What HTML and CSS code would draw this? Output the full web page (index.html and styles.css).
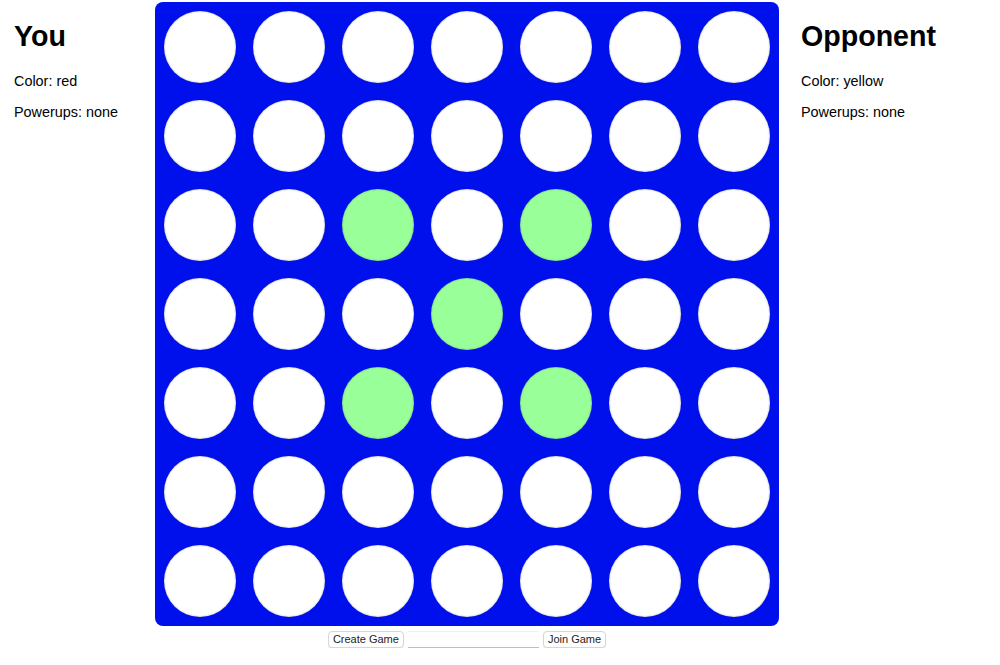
FILE: index.html
```html
<!DOCTYPE html>
<html>
<head>
<meta charset="utf-8">
<link rel="stylesheet" href="styles.css">
</head>
<body>
<div class="page">
  <div class="player player-left">
    <h1 class="name">You</h1>
    <p class="info">Color: red</p>
    <p class="info">Powerups: none</p>
  </div>
  <div class="center">
    <div class="board">
      <div class="cell"><div class="hole"></div></div>
      <div class="cell"><div class="hole"></div></div>
      <div class="cell"><div class="hole"></div></div>
      <div class="cell"><div class="hole"></div></div>
      <div class="cell"><div class="hole"></div></div>
      <div class="cell"><div class="hole"></div></div>
      <div class="cell"><div class="hole"></div></div>

      <div class="cell"><div class="hole"></div></div>
      <div class="cell"><div class="hole"></div></div>
      <div class="cell"><div class="hole"></div></div>
      <div class="cell"><div class="hole"></div></div>
      <div class="cell"><div class="hole"></div></div>
      <div class="cell"><div class="hole"></div></div>
      <div class="cell"><div class="hole"></div></div>

      <div class="cell"><div class="hole"></div></div>
      <div class="cell"><div class="hole"></div></div>
      <div class="cell"><div class="hole hint"></div></div>
      <div class="cell"><div class="hole"></div></div>
      <div class="cell"><div class="hole hint"></div></div>
      <div class="cell"><div class="hole"></div></div>
      <div class="cell"><div class="hole"></div></div>

      <div class="cell"><div class="hole"></div></div>
      <div class="cell"><div class="hole"></div></div>
      <div class="cell"><div class="hole"></div></div>
      <div class="cell"><div class="hole hint"></div></div>
      <div class="cell"><div class="hole"></div></div>
      <div class="cell"><div class="hole"></div></div>
      <div class="cell"><div class="hole"></div></div>

      <div class="cell"><div class="hole"></div></div>
      <div class="cell"><div class="hole"></div></div>
      <div class="cell"><div class="hole hint"></div></div>
      <div class="cell"><div class="hole"></div></div>
      <div class="cell"><div class="hole hint"></div></div>
      <div class="cell"><div class="hole"></div></div>
      <div class="cell"><div class="hole"></div></div>

      <div class="cell"><div class="hole"></div></div>
      <div class="cell"><div class="hole"></div></div>
      <div class="cell"><div class="hole"></div></div>
      <div class="cell"><div class="hole"></div></div>
      <div class="cell"><div class="hole"></div></div>
      <div class="cell"><div class="hole"></div></div>
      <div class="cell"><div class="hole"></div></div>

      <div class="cell"><div class="hole"></div></div>
      <div class="cell"><div class="hole"></div></div>
      <div class="cell"><div class="hole"></div></div>
      <div class="cell"><div class="hole"></div></div>
      <div class="cell"><div class="hole"></div></div>
      <div class="cell"><div class="hole"></div></div>
      <div class="cell"><div class="hole"></div></div>
    </div>
    <div class="controls">
      <button class="btn">Create Game</button>
      <input class="code" type="text">
      <button class="btn">Join Game</button>
    </div>
  </div>
  <div class="player player-right">
    <h1 class="name">Opponent</h1>
    <p class="info">Color: yellow</p>
    <p class="info">Powerups: none</p>
  </div>
</div>
</body>
</html>
```
FILE: styles.css
```css
html, body {
  margin: 0;
  padding: 0;
  background: #ffffff;
}
body {
  font-family: "Liberation Sans", Arial, sans-serif;
  color: #000;
}
.page {
  display: flex;
  align-items: flex-start;
}
.player {
  display: flex;
  flex-direction: column;
  flex: none;
}
.player-left {
  width: 155px;
  padding-left: 14px;
  box-sizing: border-box;
}
.player-right {
  padding-left: 22px;
}
.name {
  font-size: 28.6px;
  line-height: 33px;
  font-weight: bold;
  margin: 20px 0 19px 0;
}
.info {
  font-size: 14.4px;
  line-height: 18px;
  margin: 0 0 12.5px 0;
}
.center {
  display: flex;
  flex-direction: column;
  align-items: center;
  padding-top: 2px;
  flex: none;
}
.board {
  width: 624px;
  height: 624px;
  background: #0010ec;
  border-radius: 8px;
  display: grid;
  grid-template-columns: repeat(7, 1fr);
  grid-template-rows: repeat(7, 1fr);
}
.cell {
  display: flex;
  align-items: center;
  justify-content: center;
}
.hole {
  width: 72px;
  height: 72px;
  border-radius: 50%;
  background: #ffffff;
  box-shadow: inset 0 0 2px rgba(0, 0, 0, 0.35);
}
.hole.hint {
  background: #99ff99;
  box-shadow: inset 0 0 2px rgba(0, 0, 80, 0.35);
}
.controls {
  display: flex;
  align-items: center;
  gap: 4px;
  margin-top: 5px;
}
.btn {
  font-family: "Liberation Sans", Arial, sans-serif;
  font-size: 11px;
  height: 17px;
  padding: 0 4px;
  background: #ffffff;
  color: #222;
  border: 1px solid #d6d6d6;
  border-radius: 4px;
  box-shadow: 0 1px 1px rgba(0,0,0,0.08);
  line-height: 15px;
}
.code {
  width: 131px;
  height: 17px;
  box-sizing: border-box;
  border: none;
  border-top: 1px solid #f0f0f0;
  border-bottom: 1px solid #bdbdbd;
  padding: 0;
  font-size: 11px;
}
```
